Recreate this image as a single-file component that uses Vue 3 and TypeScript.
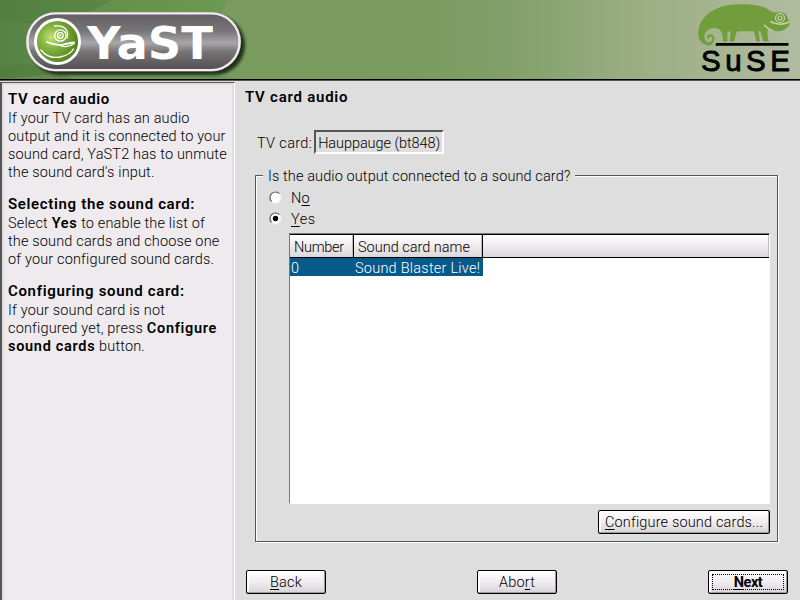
<script setup lang="ts">
import { ref } from 'vue'

interface Piece { text: string; bold?: boolean }
interface Section { title: string; lines: Piece[][] }

const help: Section[] = [
  {
    title: 'TV card audio',
    lines: [
      [{ text: 'If your TV card has an audio' }],
      [{ text: 'output and it is connected to your' }],
      [{ text: 'sound card, YaST2 has to unmute' }],
      [{ text: "the sound card's input." }],
    ],
  },
  {
    title: 'Selecting the sound card:',
    lines: [
      [{ text: 'Select ' }, { text: 'Yes', bold: true }, { text: ' to enable the list of' }],
      [{ text: 'the sound cards and choose one' }],
      [{ text: 'of your configured sound cards.' }],
    ],
  },
  {
    title: 'Configuring sound card:',
    lines: [
      [{ text: 'If your sound card is not' }],
      [{ text: 'configured yet, press ' }, { text: 'Configure', bold: true }],
      [{ text: 'sound cards', bold: true }, { text: ' button.' }],
    ],
  },
]

const connected = ref<'no' | 'yes'>('yes')
const cards = [{ number: 0, name: 'Sound Blaster Live!' }]
const selected = ref(0)
</script>

<template>
  <div class="screen">
    <header class="banner">
      <svg class="art" width="800" height="79" viewBox="0 0 800 79">
        <defs>
          <linearGradient id="bg" x1="0" x2="1" y1="0" y2="0">
            <stop offset="0" stop-color="#779a5b" />
            <stop offset=".53" stop-color="#7a9c60" />
            <stop offset=".63" stop-color="#809f6a" />
            <stop offset=".8" stop-color="#9bae83" />
            <stop offset=".92" stop-color="#a9b694" />
            <stop offset="1" stop-color="#b1bba0" />
          </linearGradient>
          <linearGradient id="leaf" x1="0" x2="1" y1="0" y2="0">
            <stop offset="0" stop-color="#568344" />
            <stop offset=".5" stop-color="#64914c" />
            <stop offset="1" stop-color="#6b9853" />
          </linearGradient>
          <linearGradient id="metal" x1="0" x2="0" y1="0" y2="1">
            <stop offset="0" stop-color="#625e61" />
            <stop offset=".3" stop-color="#777477" />
            <stop offset=".52" stop-color="#a8a6a8" />
            <stop offset=".68" stop-color="#777476" />
            <stop offset="1" stop-color="#514e51" />
          </linearGradient>
          <radialGradient id="orb" cx=".35" cy=".4" r=".65">
            <stop offset="0" stop-color="#c6e37d" />
            <stop offset=".4" stop-color="#87b442" />
            <stop offset="1" stop-color="#52861f" />
          </radialGradient>
          <filter id="soft" x="-10%" y="-20%" width="120%" height="150%">
            <feGaussianBlur stdDeviation="1.6" />
          </filter>
        </defs>
        <rect width="800" height="79" fill="url(#bg)" />
        <path d="M0 0H226Q226 8 218 16Q150 70 0 79Z" fill="url(#leaf)" />
        <path d="M0 20Q60 32 112 0H0Z" fill="#4f7d3d" opacity=".45" />
        <path d="M0 66Q35 59 75 79H0Z" fill="#4d7b3c" opacity=".45" />
        <path d="M68 71Q150 62 240 79H75Z" fill="#6e9659" />
        <rect x="30" y="15" width="215" height="60" rx="30" fill="#182814" filter="url(#soft)" opacity=".9" />
        <rect x="26" y="12" width="215" height="59.5" rx="29.5" fill="#b8adb3" />
        <rect x="27.5" y="13.5" width="212" height="56.5" rx="28" fill="url(#metal)" stroke="#f3edf1" stroke-width="2.2" />
        <circle cx="57.5" cy="41.5" r="23.5" fill="#fff" />
        <circle cx="57.5" cy="41.5" r="20.6" fill="url(#orb)" />
        <g fill="none" stroke="#fff" stroke-linecap="round">
          <circle cx="60.4" cy="35.5" r="5.7" stroke-width="1.3" />
          <circle cx="60.4" cy="35.5" r="2.8" stroke-width="1.3" />
          <path d="M54.5 26Q63 25 66.5 30Q68.5 34 67 38" stroke-width="1.3" />
          <path d="M47 42Q56 46 63 44.6Q70 43 74 42.5" stroke-width="1.8" />
          <path d="M74 43.5Q68 48.5 60 45.5" stroke-width="1.3" />
          <path d="M41 50Q48 59 60 57Q70 55 73.5 49" stroke-width="1.4" />
        </g>
        <circle cx="60.4" cy="35.5" r="1" fill="#fff" />
        <text class="yast" x="87" y="58.5" textLength="126" lengthAdjust="spacingAndGlyphs">YaST</text>

        <path fill="#729d3c" d="M709 45.5C702 45 698 40 698.2 33C698.5 24 703 17 711 11.5C720 5.5 732 4 745 4.2C756 4.3 765 6.5 773.5 12.5C778 11.5 783 12 786 14.5L788.8 20.5L790 23.5C788 28 783 31.5 777.5 31.2C774 31 770 30 768 28.6C767 33 767.5 37 769 41.5H763.5C762 38 761 34 760.5 31.5L758.5 31L760 41.5H756.5C755.5 38 754.5 33 753.5 31C747 31.5 742 31 737 31.5C735.5 34 735 38 734.5 41.5H730L730.5 31.5L727.5 31.2L727.3 41.5H723C723 36 722 32 720 29.5C715 26.5 709 28 706 32C702.5 37 705 43 709 42.5C713 42 713.5 37 710.5 36.5C708.5 36.5 708 38.5 709.5 39.2C706.5 39.5 706 35 709.5 34.3C714 33.5 716 39 713 42.5C712.5 44.5 711 45.5 709 45.5Z" />
        <g fill="none" stroke="#c3d4a8">
          <circle cx="780" cy="18" r="4.5" stroke-width="1.2" />
          <circle cx="780" cy="18" r="2" stroke-width="1.1" />
          <path d="M770.5 21.5Q779 26.5 789.5 22" stroke-width="1.5" />
          <path d="M764 25Q768 29 772.5 30.5" stroke-width="1.4" />
        </g>
        <path d="M716 43H788.5V45.8H715.5Z" fill="#000" />
        <text class="suse" x="701" y="70.8" textLength="89" lengthAdjust="spacing">SuSE</text>
      </svg>
    </header>

    <div class="body">
      <aside class="help">
        <section v-for="s in help" :key="s.title">
          <h2>{{ s.title }}</h2>
          <p v-for="(line, i) in s.lines" :key="i"><template v-for="(p, j) in line" :key="j"><b v-if="p.bold">{{ p.text }}</b><span v-else>{{ p.text }}</span></template></p>
        </section>
      </aside>

      <main class="content">
        <h1>TV card audio</h1>
        <div class="field"><span class="label">TV card:</span><output>Hauppauge (bt848)</output></div>

        <div class="group" role="group">
          <div class="legend">Is the audio output connected to a sound card?</div>
          <div class="radio" @click="connected = 'no'">
            <svg width="14" height="14" viewBox="0 0 14 14">
              <circle cx="6.5" cy="6.5" r="5.5" fill="#fff" stroke="#f4f4f4" />
              <path d="M2.6 10.4A5.5 5.5 0 0 1 10.4 2.6" fill="none" stroke="#555" stroke-width="1.2" />
              <circle v-if="connected === 'no'" cx="6.5" cy="6.5" r="2.7" />
            </svg>
            <span>N<u>o</u></span>
          </div>
          <div class="radio" @click="connected = 'yes'">
            <svg width="14" height="14" viewBox="0 0 14 14">
              <circle cx="6.5" cy="6.5" r="5.5" fill="#fff" stroke="#f4f4f4" />
              <path d="M2.6 10.4A5.5 5.5 0 0 1 10.4 2.6" fill="none" stroke="#555" stroke-width="1.2" />
              <circle v-if="connected === 'yes'" cx="6.5" cy="6.5" r="2.7" />
            </svg>
            <span class="yes"><u>Y</u>es</span>
          </div>

          <div class="list">
            <div class="head">
              <div class="c-num">Number</div>
              <div class="c-name">Sound card name</div>
              <div class="c-rest"></div>
            </div>
            <div v-for="c in cards" :key="c.number" class="row" :class="{ on: selected === c.number }" @click="selected = c.number">
              <div class="r-num">{{ c.number }}</div>
              <div class="r-name">{{ c.name }}</div>
            </div>
          </div>
          <button class="configure"><span><u>C</u>onfigure sound cards...</span></button>
        </div>

        <footer class="actions">
          <button><span><u>B</u>ack</span></button>
          <button><span>Abo<u>r</u>t</span></button>
          <button class="next"><span><u>N</u>ext</span></button>
        </footer>
      </main>
    </div>
  </div>
</template>

<style>
body { background: #dedede; overflow: hidden; }
</style>

<style scoped>
* { box-sizing: border-box; }
.screen { width: 800px; height: 600px; display: flex; flex-direction: column; background: #dedede; color: #000; font: 300 14.5px/18px Roboto, "Liberation Sans", sans-serif; letter-spacing: .16px; white-space: pre; overflow: hidden; }
.banner { height: 81px; flex: none; border-bottom: 1px solid #5c5052; background: #000; }
.art { display: block; }
.yast { font: 700 44px "DejaVu Sans", sans-serif; letter-spacing: 0; fill: #fff; }
.suse { font: 400 29.5px "Liberation Sans", sans-serif; letter-spacing: 0; fill: #000; stroke: #000; stroke-width: .9px; }
h1, h2, p { margin: 0; }
.body { flex: 1; display: flex; min-height: 0; }
.help { width: 235px; flex: none; margin-top: 1px; border-left: 2px solid #555; border-top: 1px solid #555; border-right: 1px solid #fff; box-shadow: inset 2px 2px #dedede, inset -2px 0 #dedede; background: #eeeaee; padding: 7px 0 0 6px; }
.help section { margin-bottom: 13px; }
.help h2, .content h1 { font-size: 15px; font-weight: 600; letter-spacing: .76px; }
.help h2 { height: 20px; line-height: 18px; letter-spacing: .66px; }
.help p { height: 18px; line-height: 17px; }
b { font-weight: 600; letter-spacing: .7px; }
.content { flex: 1; display: flex; flex-direction: column; padding: 6px 12px 6px 11px; }
.content h1 { height: 20px; line-height: 20px; margin-left: -1px; }
.field { display: flex; align-items: center; margin: 23px 0 0 11px; height: 24px; }
.label { letter-spacing: .35px; padding-top: 3px; }
.field output { margin-left: 2px; width: 130px; height: 24px; border: 2px solid; border-color: #555 #fff #fff #555; line-height: 24px; padding-left: 2px; letter-spacing: -.07px; }
.group { flex: none; margin: 13px 10px 0 9px; padding: 0 8px 0 18px; height: 375px; position: relative; }
.group::before { content: ""; position: absolute; inset: 8px 0 0 0; border: 1px solid #555; box-shadow: 1px 1px #fff, inset 1px 1px #fff; pointer-events: none; }
.group > * { position: relative; }
.legend { width: 312px; height: 20px; line-height: 20px; background: #dedede; padding-left: 5px; margin-left: -10px; letter-spacing: .11px; }
.radio { display: flex; align-items: center; gap: 8px; height: 21px; margin-left: -4px; padding-top: 3px; }
.radio svg { margin-top: -3px; }
.yes { letter-spacing: .5px; }
u { text-underline-offset: 2px; text-decoration-thickness: 1px; }
.list { width: 481px; height: 271px; margin: 4px 0 0 16px; background: #fff; border: 1px solid; border-color: #777 #fff #fff #777; }
.head { display: flex; height: 24px; border-top: 1px solid #000; border-bottom: 1px solid #000; background: linear-gradient(#fff, #dcd7dc); letter-spacing: 0; }
.head div { border-right: 1px solid #000; box-shadow: inset -1px 0 #bbb; padding: 4px 0 0 4px; }
.head .c-num { width: 64px; letter-spacing: -.3px; }
.c-name { width: 129px; }
.head .c-rest { flex: 1; border: 0; }
.row { display: flex; height: 18px; line-height: 21px; width: 193px; letter-spacing: .24px; }
.row.on { background: #085a8b; color: #fff; }
.r-num { width: 65px; padding-left: 1px; }
button { font: inherit; letter-spacing: inherit; color: #000; height: 24px; width: 80px; padding: 2px 0 0; border: 1px solid #000; border-radius: 2px; background: linear-gradient(#fff, #f0ecf0 50%, #d8d3d8); box-shadow: inset -1px -1px #999, inset 2px 2px #fff; }
.configure { display: block; width: 172px; margin: 6px 0 0 auto; }
.actions { display: flex; justify-content: space-between; margin-top: auto; }
.next { font-weight: 700; letter-spacing: -.5px; outline: 1px dotted #000; outline-offset: -5px; }
</style>
